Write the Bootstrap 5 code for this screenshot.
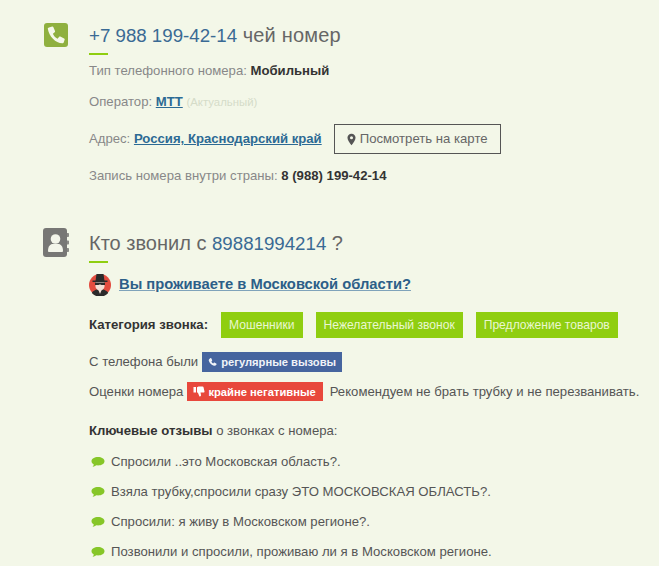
<!DOCTYPE html>
<html lang="ru">
<head>
<meta charset="utf-8">
<title>Номер</title>
<link href="https://cdn.jsdelivr.net/npm/bootstrap@5.3.0/dist/css/bootstrap.min.css" rel="stylesheet">
<style>
html,body{height:566px;overflow:hidden}
body{background:#f3f7e8;font-family:"Liberation Sans",Arial,sans-serif;font-size:13.15px;line-height:20px;color:#555}
.pg{padding:23px 0 0 44px;width:659px}
.sec-icon{width:24px;height:24px;flex:0 0 24px;margin-right:21px}
.bookic{width:26px;height:29px;flex:0 0 26px;margin:-3px 20px 0 -1px}
.ttl{font-size:20px;line-height:24px;color:#666;margin:0;font-weight:400;white-space:nowrap}
.ttl a{color:#3a6a94;text-decoration:none;font-size:18.7px;line-height:1}
.wide{letter-spacing:.2px}
.rule{width:19px;height:2px;background:#8fce10;margin:6px 0 6px}
.rule2{margin-bottom:9px}
.ln{line-height:20px;white-space:nowrap}
.mut{color:#888}
.dk{color:#333;font-weight:700}
.lnk{color:#2c6a94;font-weight:700;text-decoration:underline}
.fade-txt{color:#d5dcc8;font-size:11.4px;line-height:1}
.gap11{margin-top:11px}
.addr{margin-top:12px;height:30px}
.mapbtn{border:1px solid #555;color:#666;font-size:13.15px;line-height:20px;padding:0 12px;margin-left:12px;display:inline-flex;align-items:center;gap:4px;height:30px}
.gap12{margin-top:12px}
.sec2{margin-top:45px}
.askrow{height:24px}
.ask{font-size:14.75px;line-height:24px;color:#2c5f88;font-weight:700;text-decoration:underline;text-decoration-color:#7fa3ba}
.catrow{margin-top:16px;height:26px}
.tagb{background:#8fce10;color:#eaf7d0;font-size:12.1px;line-height:26px;padding:0 8px;height:26px;display:inline-block;white-space:nowrap;margin-left:13px}
.lab{font-weight:700;color:#333;white-space:nowrap;font-size:13.2px}
.pill{display:inline-flex;align-items:center;font-size:11.2px;font-weight:700;white-space:nowrap;margin-left:4px}
.pblue{background:#46659f;color:#f0f3f8;height:20px;padding:0 6px;gap:4px}
.pred{background:#e8483c;color:#fff;height:19px;padding:0 7px 0 6px;gap:3px}
.r1{margin-top:14px;height:20px}
.r2{margin-top:10px;height:19px}
.rec{margin-left:7px}
.keys{margin-top:20px}
.rvlist{margin-top:11px;gap:10px}
.rv{display:flex;align-items:center;gap:6px;line-height:20px;white-space:nowrap;padding-left:2px}
</style>
</head>
<body>
<div class="pg">
  <div class="d-flex">
    <svg class="sec-icon" viewBox="0 0 24 24"><rect width="24" height="24" rx="3" fill="#8fb03f"/><path d="M5 4.500l3.200-1c.5-.1.9.1 1.100.6l1.700 4c.2.500.1.900-.3 1.200l-1.800 1.400c.9 2.200 2.500 3.900 4.600 5l1.500-1.800c.3-.4.8-.5 1.300-.3l3.800 1.800c.5.2.7.7.6 1.200l-1 3c-.2.600-.7.800-1.300.7C11.500 20 5 13.500 3.800 5.700c-.1-.5.5-1 1.200-1.200z" fill="#f5f8ea"/></svg>
    <div>
      <h2 class="ttl"><a href="#">+7 988 199-42-14</a> <span class="wide">чей номер</span></h2>
      <div class="rule"></div>
      <div class="ln mut">Тип телефонного номера: <span class="dk">Мобильный</span></div>
      <div class="ln mut gap11">Оператор: <a class="lnk" href="#">МТТ</a> <span class="fade-txt">(Актуальный)</span></div>
      <div class="ln mut d-flex align-items-center addr"><span>Адрес: <a class="lnk" href="#">Россия, Краснодарский край</a></span>
        <a class="mapbtn text-decoration-none" href="#"><svg width="9" height="13" viewBox="0 0 10 14"><path fill-rule="evenodd" d="M5 .5C2.400.5.500 2.500.500 5c0 2.800 3 6.200 4.500 8.500C6.500 11.200 9.500 7.800 9.500 5c0-2.500-1.900-4.500-4.500-4.500zm0 2.800a1.700 1.700 0 1 1 0 3.400 1.700 1.700 0 0 1 0-3.400z" fill="#555"/></svg>Посмотреть на карте</a></div>
      <div class="ln mut gap12">Запись номера внутри страны: <span class="dk">8 (988) 199-42-14</span></div>
    </div>
  </div>

  <div class="d-flex sec2">
    <svg class="bookic" viewBox="0 0 26 29"><path d="M23 5h2.200a.8.8 0 0 1 .8.800v2.400a.8.8 0 0 1-.8.800H23zM23 12.500h2.200a.8.8 0 0 1 .8.800v2.400a.8.8 0 0 1-.8.800H23zM23 20h2.200a.8.8 0 0 1 .8.800v2.400a.8.8 0 0 1-.8.800H23z" fill="#8a8a86"/><rect width="24" height="29" rx="3" fill="#777775"/><circle cx="12.500" cy="11" r="4.800" fill="#f3f5ea"/><path d="M5 23c0-5 2.500-7 4.500-7h6c2 0 4.500 2 4.500 7 0 .8-.6 1-1 1H6c-.4 0-1-.2-1-1z" fill="#f3f5ea"/></svg>
    <div>
      <h2 class="ttl"><span>Кто звонил с</span> <a href="#">89881994214</a> ?</h2>
      <div class="rule rule2"></div>
      <div class="d-flex align-items-center gap-2 askrow">
        <svg width="22" height="23" viewBox="0 0 22 23"><circle cx="11" cy="12" r="11" fill="#e34c3f"/><path d="M11 16c-3 0-7 1.500-8.200 4a11 11 0 0 0 16.400 0C18 17.500 14 16 11 16z" fill="#2b2b2b"/><path d="M9 16h4l-2 5z" fill="#f3dfd6"/><path d="M6.500 9h9v4.500c0 2.300-2 4-4.500 4s-4.500-1.700-4.500-4z" fill="#f3dfd6"/><path d="M6 9.500h10v2.500h-3.500l-1-.6h-1l-1 .6H6z" fill="#2b2b2b"/><path d="M6.500 8 7.500 1h7l1 7z" fill="#2b2b2b"/><path d="M3.500 7.500h15V9h-15z" fill="#2b2b2b"/></svg>
        <a class="ask" href="#">Вы проживаете в Московской области?</a>
      </div>
      <div class="d-flex align-items-center catrow">
        <span class="lab">Категория звонка:</span>
        <span class="tagb">Мошенники</span>
        <span class="tagb">Нежелательный звонок</span>
        <span class="tagb">Предложение товаров</span>
      </div>
      <div class="d-flex align-items-center r1">
        <span class="ln">С телефона были</span>
        <span class="pill pblue"><svg width="9" height="10" viewBox="0 0 24 24"><path d="M6 2c1-.8 2.400-.6 3 .6l2 4c.4.9.2 1.800-.5 2.400L9 10.500c1 2.400 2.600 4.100 5 5.200l1.500-1.500c.7-.7 1.600-.8 2.400-.4l4 2.200c1.100.6 1.300 2 .5 3-1.600 2-3.800 3.400-6.400 2.700C9 20 3.500 14.400 2 8 1.500 5.800 3.800 3.600 6 2z" fill="#f0f3f8"/></svg>регулярные вызовы</span>
      </div>
      <div class="d-flex align-items-center r2">
        <span class="ln">Оценки номера</span>
        <span class="pill pred"><svg width="12" height="11" viewBox="0 0 24 22"><path d="M1 2h5v11H1zM8 2.500 11 1h8c1.200 0 2 .7 2.200 1.800l1.800 8c.2 1.200-.6 2.200-1.800 2.200H15l1 5c.2 1.500-.8 3-2 3-.8 0-1.200-.5-1.500-1.200L10 14l-2-1.500z" fill="#fff"/></svg>крайне негативные</span>
        <span class="ln rec">Рекомендуем не брать трубку и не перезванивать.</span>
      </div>
      <div class="ln keys"><span class="dk">Ключевые отзывы</span> о звонках с номера:</div>
      <div class="d-flex flex-column rvlist">
        <div class="rv"><svg width="14" height="12" viewBox="0 0 14 12"><path d="M7 1c3.600 0 6.500 1.800 6.500 4.200S10.600 9.400 7 9.400c-.6 0-1.100 0-1.600-.1C4.300 10.200 2.800 10.800 1.500 11c.7-.8 1.200-1.700 1.300-2.600C1.300 7.600.5 6.500.5 5.200.5 2.800 3.400 1 7 1z" fill="#86c628"/></svg><span>Спросили ..это Московская область?.</span></div>
        <div class="rv"><svg width="14" height="12" viewBox="0 0 14 12"><path d="M7 1c3.600 0 6.500 1.800 6.500 4.200S10.600 9.400 7 9.400c-.6 0-1.100 0-1.600-.1C4.300 10.200 2.800 10.800 1.500 11c.7-.8 1.200-1.700 1.300-2.600C1.300 7.600.5 6.500.5 5.200.5 2.800 3.400 1 7 1z" fill="#86c628"/></svg><span>Взяла трубку,спросили сразу ЭТО МОСКОВСКАЯ ОБЛАСТЬ?.</span></div>
        <div class="rv"><svg width="14" height="12" viewBox="0 0 14 12"><path d="M7 1c3.600 0 6.500 1.800 6.500 4.200S10.600 9.400 7 9.400c-.6 0-1.100 0-1.600-.1C4.300 10.200 2.800 10.800 1.500 11c.7-.8 1.200-1.700 1.300-2.600C1.300 7.600.5 6.500.5 5.200.5 2.800 3.400 1 7 1z" fill="#86c628"/></svg><span>Спросили: я живу в Московском регионе?.</span></div>
        <div class="rv"><svg width="14" height="12" viewBox="0 0 14 12"><path d="M7 1c3.600 0 6.500 1.800 6.500 4.200S10.600 9.400 7 9.400c-.6 0-1.100 0-1.600-.1C4.300 10.200 2.800 10.800 1.500 11c.7-.8 1.200-1.700 1.300-2.600C1.300 7.600.5 6.500.5 5.200.5 2.800 3.400 1 7 1z" fill="#86c628"/></svg><span>Позвонили и спросили, проживаю ли я в Московском регионе.</span></div>
      </div>
    </div>
  </div>
</div>
</body>
</html>
